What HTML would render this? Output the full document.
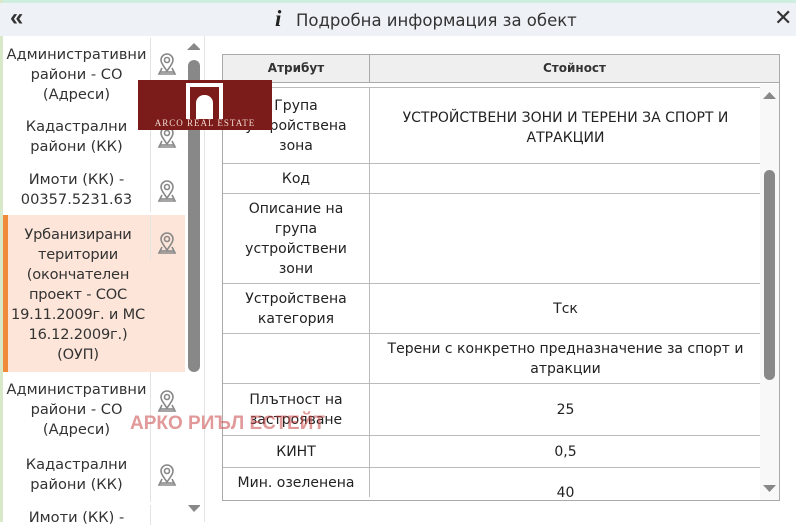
<!DOCTYPE html>
<html><head><meta charset="utf-8"><style>
*{margin:0;padding:0;box-sizing:border-box}
body{width:796px;height:522px;overflow:hidden;background:#fff;font-family:"Liberation Sans","DejaVu Sans",sans-serif;color:#222;position:relative}
.a{position:absolute}
.hdr{left:0;top:3px;width:796px;height:33px;background:#eef2f6}
.it{position:absolute;left:3px;width:147px;text-align:center;line-height:20px;color:#333;display:flex;align-items:center;justify-content:center;font-family:"DejaVu Sans",sans-serif;font-size:14.6px}
.ic{position:absolute;left:150px;width:35px;border-left:1px solid #e3e3e3}
.row{position:absolute;left:223px;width:538px;border-top:1px solid #bbb}
.c1{position:absolute;left:223px;width:146px;text-align:center;line-height:20px;display:flex;align-items:center;justify-content:center;font-family:"DejaVu Sans",sans-serif;font-size:14px;padding:0 20px}
.c2{position:absolute;left:370px;width:391px;text-align:center;font-size:14px;line-height:20px;display:flex;align-items:center;justify-content:center;font-family:"DejaVu Sans",sans-serif;padding:0 10px}
</style></head><body>
<div class="a" style="left:0;top:0;width:796px;height:3px;background:#cfeee0"></div>
<div class="a" style="left:0;top:0;width:3px;height:522px;background:#d8e8c8"></div>
<div class="a hdr"></div>
<div class="a" style="left:10px;top:4px;font-size:24px;color:#333;font-weight:bold">«</div>
<div class="a" style="left:275px;top:6px;font-size:23px;font-weight:bold;font-style:italic;font-family:'Liberation Serif',serif;color:#222">i</div>
<div class="a" style="left:296px;top:11px;color:#333;font-family:'DejaVu Sans',sans-serif;font-size:16.5px">Подробна информация за обект</div>
<div class="a" style="left:774px;top:5px;font-size:22px;color:#333;font-weight:bold">✕</div>

<div class="a" style="left:3px;top:215px;width:182px;height:157px;background:#fde6d9"></div>
<div class="a" style="left:3px;top:215px;width:5px;height:157px;background:#ee8a3a"></div>
<div class="it" style="top:40px;height:70px">Административни райони - СО (Адреси)</div>
<div class="it" style="top:112px;height:50px">Кадастрални райони (КК)</div>
<div class="it" style="top:165px;height:50px">Имоти (КК) - 00357.5231.63</div>
<div class="it" style="top:218px;height:154px;left:4px;width:148px;letter-spacing:-0.2px">Урбанизирани<br>територии<br>(окончателен<br>проект - СОС<br>19.11.2009г. и МС<br>16.12.2009г.)<br>(ОУП)</div>
<div class="it" style="top:374px;height:72px">Административни райони - СО (Адреси)</div>
<div class="it" style="top:448px;height:54px">Кадастрални райони (КК)</div>
<div class="it" style="top:508px;height:20px">Имоти (КК) -</div>
<div class="ic" style="top:38px;height:74px"></div>
<div class="ic" style="top:112px;height:50px"></div>
<div class="ic" style="top:162px;height:50px"></div>
<div class="ic" style="top:215px;height:45px"></div>
<div class="ic" style="top:372px;height:73px"></div>
<div class="ic" style="top:445px;height:57px"></div>
<div class="ic" style="top:505px;height:20px"></div>
<svg class="a" style="left:0;top:0" width="200" height="522">
<defs><g id="pin" fill="none" stroke="#888" stroke-width="1.6"><path d="M8 18 C3 11 2 9 2 7 A6 6 0 0 1 14 7 C14 9 13 11 8 18Z"/><circle cx="8" cy="7" r="2.5"/><path d="M3 15 L0 21 L16 21 L13 15" /><path d="M1 19 H15"/></g></defs>
<use href="#pin" x="159" y="53"/><use href="#pin" x="159" y="126"/><use href="#pin" x="159" y="180"/><use href="#pin" x="159" y="232"/><use href="#pin" x="159" y="390"/><use href="#pin" x="159" y="464"/>
<path d="M187 50 L194 43 L201 50Z" fill="#888"/>
<rect x="188" y="60" width="12" height="312" rx="6" fill="#888"/>
<path d="M188 505 L194 512 L201 505Z" fill="#888"/>
</svg>
<div class="a" style="left:204px;top:36px;width:1px;height:486px;background:#e4e4e4"></div>

<div class="a" style="left:222px;top:54px;width:558px;height:447px;border:1px solid #aaa"></div>
<div class="a" style="left:223px;top:55px;width:556px;height:28px;background:#efefef;border-bottom:1px solid #aaa"></div>
<div class="a" style="left:369px;top:55px;width:1px;height:28px;background:#aaa"></div>
<div class="a" style="left:223px;top:61px;width:146px;text-align:center;font-size:12px;font-weight:bold;color:#333;font-family:'DejaVu Sans',sans-serif">Атрибут</div>
<div class="a" style="left:370px;top:61px;width:409px;text-align:center;font-size:12px;font-weight:bold;color:#333;font-family:'DejaVu Sans',sans-serif">Стойност</div>
<div class="a" style="left:369px;top:83px;width:1px;height:417px;background:#bbb"></div>
<div class="row" style="top:163px"></div>
<div class="row" style="top:193px"></div>
<div class="row" style="top:283px"></div>
<div class="row" style="top:333px"></div>
<div class="row" style="top:383px"></div>
<div class="row" style="top:435px"></div>
<div class="row" style="top:467px"></div>
<div class="c1" style="top:88px;height:75px">Група устройствена зона</div>
<div class="c2" style="top:92px;height:75px;padding-bottom:4px">УСТРОЙСТВЕНИ ЗОНИ И ТЕРЕНИ ЗА СПОРТ И АТРАКЦИИ</div>
<div class="c1" style="top:164px;height:29px">Код</div>
<div class="c1" style="top:194px;height:89px">Описание на група устройствени зони</div>
<div class="c1" style="top:284px;height:49px">Устройствена категория</div>
<div class="c2" style="top:298px;height:22px">Тск</div>
<div class="c2" style="top:334px;height:49px">Терени с конкретно предназначение за спорт и атракции</div>
<div class="c1" style="top:384px;height:51px">Плътност на застрояване</div>
<div class="c2" style="top:398px;height:24px">25</div>
<div class="c1" style="top:436px;height:31px">КИНТ</div>
<div class="c2" style="top:436px;height:31px">0,5</div>
<div class="c1" style="top:472px;height:22px;padding:0">Мин. озеленена</div>
<div class="c2" style="top:482px;height:22px">40</div>
<div class="a" style="left:223px;top:497px;width:556px;height:3px;background:#fff"></div>
<div class="a" style="left:223px;top:83px;width:556px;height:4px;background:#fff"></div>
<div class="row" style="top:87px"></div>
<svg class="a" style="left:760px;top:84px" width="19" height="416">
<rect width="19" height="416" fill="#f8f8f8"/>
<path d="M3 15 L9.5 8 L16 15Z" fill="#888"/>
<rect x="4" y="86" width="11" height="210" rx="5.5" fill="#888"/>
<path d="M3 401 L9.5 408 L16 401Z" fill="#888"/>
</svg>

<div class="a" style="left:138px;top:80px;width:134px;height:50px;background:#7b1c1a"></div>
<div class="a" style="left:186px;top:83px;width:37px;height:36px;background:#fff"></div>
<div class="a" style="left:190px;top:87px;width:29px;height:32px;background:#7b1c1a"></div>
<div class="a" style="left:196px;top:95px;width:17px;height:24px;background:#fff;border-radius:8px 8px 0 0"></div>
<div class="a" style="left:138px;top:118px;width:134px;text-align:center;font-family:'Liberation Serif',serif;font-size:9px;color:#f0d8d0;letter-spacing:1px">ARCO REAL ESTATE</div>
<div class="a" style="left:130px;top:413px;font-size:19px;font-weight:bold;color:rgba(200,70,70,0.55)">АРКО РИЪЛ ЕСТЕЙТ</div>
</body></html>
